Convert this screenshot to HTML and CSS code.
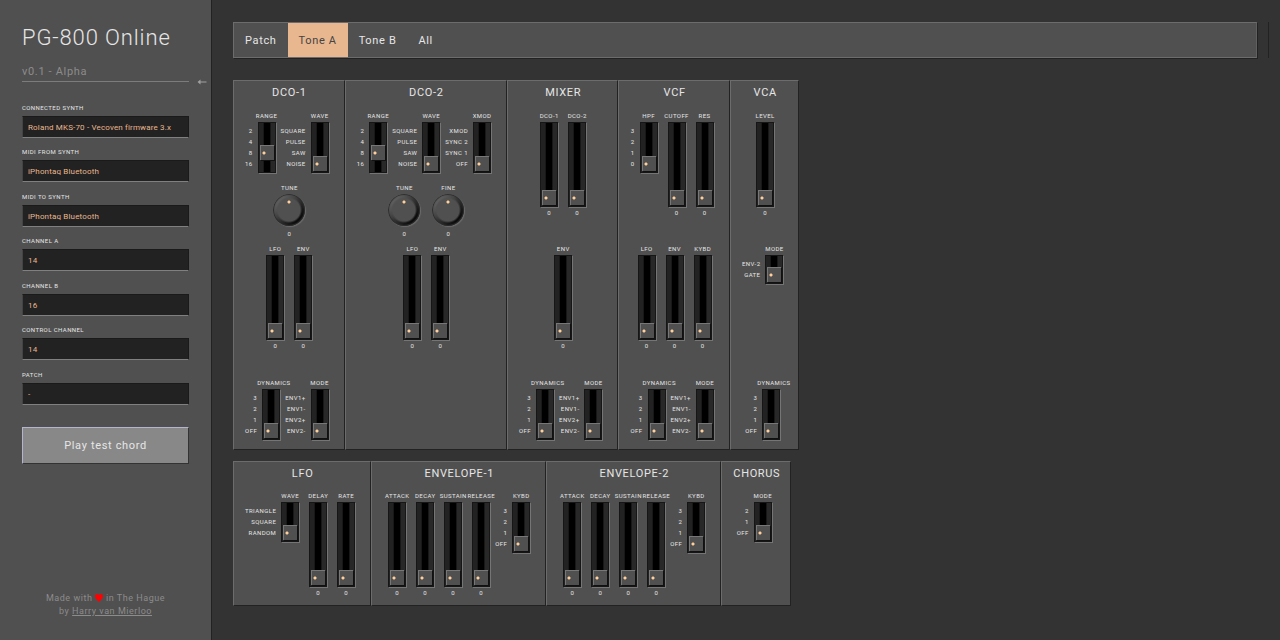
FILE: index.html
```html
<!DOCTYPE html>
<html lang="en">
<head>
<meta charset="utf-8">
<meta name="viewport" content="width=device-width, initial-scale=1">
<title>PG-800 Online</title>
<link rel="stylesheet" href="styles.css">
</head>
<body>
<div class="app">
  <aside class="sidebar">
    <h1 class="brand">PG-800 Online</h1>
    <div class="version-row">
      <p class="version">v0.1 - Alpha</p>
      <button class="collapse" type="button" aria-label="Collapse sidebar">
        <svg width="10" height="6" viewBox="0 0 10 6"><path d="M0.5 3 L3.5 0.5 V2.4 H9.5 V3.6 H3.5 V5.5 Z"/></svg>
      </button>
    </div>
    <form class="settings">
      <div class="fields">
        <label class="field"><span>CONNECTED SYNTH</span><select><option>Roland MKS-70 - Vecoven firmware 3.x</option></select></label>
        <label class="field"><span>MIDI FROM SYNTH</span><select><option>iPhontaq Bluetooth</option></select></label>
        <label class="field"><span>MIDI TO SYNTH</span><select><option>iPhontaq Bluetooth</option></select></label>
        <label class="field"><span>CHANNEL A</span><select><option>14</option></select></label>
        <label class="field"><span>CHANNEL B</span><select><option>16</option></select></label>
        <label class="field"><span>CONTROL CHANNEL</span><select><option>14</option></select></label>
        <label class="field"><span>PATCH</span><select><option>-</option></select></label>
      </div>
      <button class="play" type="button">Play test chord</button>
    </form>
    <footer class="credits">
      Made with <svg class="heart" width="8" height="8" viewBox="0 0 8 8"><path d="M4 8 C3.2 6.8 0 4.6 0 2.2 C0 -0.2 3 -0.6 4 1.3 C5 -0.6 8 -0.2 8 2.2 C8 4.6 4.8 6.8 4 8 Z"/></svg> in The Hague<br>
      by <a href="#">Harry van Mierloo</a>
    </footer>
  </aside>

  <main class="main">
    <div class="topbar">
      <nav class="tabs">
        <button class="tab" type="button">Patch</button>
        <button class="tab active" type="button">Tone A</button>
        <button class="tab" type="button">Tone B</button>
        <button class="tab" type="button">All</button>
      </nav>
      <div class="edge"></div>
    </div>

    <div class="rack">
      <section class="panel tall">
        <h2>DCO-1</h2>
        <div class="row r1">
          <ul class="options"><li>2</li><li>4</li><li>8</li><li>16</li></ul>
          <label class="unit"><span>RANGE</span><input class="slot pos4" type="range" min="0" max="3" value="1"></label>
          <ul class="options"><li>SQUARE</li><li>PULSE</li><li>SAW</li><li>NOISE</li></ul>
          <label class="unit"><span>WAVE</span><input class="slot pos4" type="range" min="0" max="3" value="0"></label>
        </div>
        <div class="row r2">
          <label class="unit wide"><span>TUNE</span><input class="knob" type="range" min="-12" max="12" value="0"><output>0</output></label>
        </div>
        <div class="row r3">
          <label class="unit"><span>LFO</span><input class="slot long" type="range" value="0"><output>0</output></label>
          <label class="unit"><span>ENV</span><input class="slot long" type="range" value="0"><output>0</output></label>
        </div>
        <div class="row r4">
          <ul class="options"><li>3</li><li>2</li><li>1</li><li>OFF</li></ul>
          <label class="unit"><span>DYNAMICS</span><input class="slot pos4" type="range" min="0" max="3" value="0"></label>
          <ul class="options"><li>ENV1+</li><li>ENV1-</li><li>ENV2+</li><li>ENV2-</li></ul>
          <label class="unit"><span>MODE</span><input class="slot pos4" type="range" min="0" max="3" value="0"></label>
        </div>
      </section>

      <section class="panel tall">
        <h2>DCO-2</h2>
        <div class="row r1">
          <ul class="options"><li>2</li><li>4</li><li>8</li><li>16</li></ul>
          <label class="unit"><span>RANGE</span><input class="slot pos4" type="range" min="0" max="3" value="1"></label>
          <ul class="options"><li>SQUARE</li><li>PULSE</li><li>SAW</li><li>NOISE</li></ul>
          <label class="unit"><span>WAVE</span><input class="slot pos4" type="range" min="0" max="3" value="0"></label>
          <ul class="options"><li>XMOD</li><li>SYNC 2</li><li>SYNC 1</li><li>OFF</li></ul>
          <label class="unit"><span>XMOD</span><input class="slot pos4" type="range" min="0" max="3" value="0"></label>
        </div>
        <div class="row r2">
          <label class="unit wide"><span>TUNE</span><input class="knob" type="range" min="-12" max="12" value="0"><output>0</output></label>
          <label class="unit wide"><span>FINE</span><input class="knob" type="range" min="-12" max="12" value="0"><output>0</output></label>
        </div>
        <div class="row r3">
          <label class="unit"><span>LFO</span><input class="slot long" type="range" value="0"><output>0</output></label>
          <label class="unit"><span>ENV</span><input class="slot long" type="range" value="0"><output>0</output></label>
        </div>
      </section>

      <section class="panel tall">
        <h2>MIXER</h2>
        <div class="row r1">
          <label class="unit"><span>DCO-1</span><input class="slot long" type="range" value="0"><output>0</output></label>
          <label class="unit"><span>DCO-2</span><input class="slot long" type="range" value="0"><output>0</output></label>
        </div>
        <div class="row r3">
          <label class="unit"><span>ENV</span><input class="slot long" type="range" value="0"><output>0</output></label>
        </div>
        <div class="row r4">
          <ul class="options"><li>3</li><li>2</li><li>1</li><li>OFF</li></ul>
          <label class="unit"><span>DYNAMICS</span><input class="slot pos4" type="range" min="0" max="3" value="0"></label>
          <ul class="options"><li>ENV1+</li><li>ENV1-</li><li>ENV2+</li><li>ENV2-</li></ul>
          <label class="unit"><span>MODE</span><input class="slot pos4" type="range" min="0" max="3" value="0"></label>
        </div>
      </section>

      <section class="panel tall">
        <h2>VCF</h2>
        <div class="row r1">
          <ul class="options"><li>3</li><li>2</li><li>1</li><li>0</li></ul>
          <label class="unit"><span>HPF</span><input class="slot pos4" type="range" min="0" max="3" value="0"></label>
          <label class="unit"><span>CUTOFF</span><input class="slot long" type="range" value="0"><output>0</output></label>
          <label class="unit"><span>RES</span><input class="slot long" type="range" value="0"><output>0</output></label>
        </div>
        <div class="row r3">
          <label class="unit"><span>LFO</span><input class="slot long" type="range" value="0"><output>0</output></label>
          <label class="unit"><span>ENV</span><input class="slot long" type="range" value="0"><output>0</output></label>
          <label class="unit"><span>KYBD</span><input class="slot long" type="range" value="0"><output>0</output></label>
        </div>
        <div class="row r4">
          <ul class="options"><li>3</li><li>2</li><li>1</li><li>OFF</li></ul>
          <label class="unit"><span>DYNAMICS</span><input class="slot pos4" type="range" min="0" max="3" value="0"></label>
          <ul class="options"><li>ENV1+</li><li>ENV1-</li><li>ENV2+</li><li>ENV2-</li></ul>
          <label class="unit"><span>MODE</span><input class="slot pos4" type="range" min="0" max="3" value="0"></label>
        </div>
      </section>

      <section class="panel tall">
        <h2>VCA</h2>
        <div class="row r1">
          <label class="unit"><span>LEVEL</span><input class="slot long" type="range" value="0"><output>0</output></label>
        </div>
        <div class="row r3">
          <ul class="options"><li>ENV-2</li><li>GATE</li></ul>
          <label class="unit"><span>MODE</span><input class="slot pos2" type="range" min="0" max="1" value="0"></label>
        </div>
        <div class="row r4">
          <ul class="options"><li>3</li><li>2</li><li>1</li><li>OFF</li></ul>
          <label class="unit"><span>DYNAMICS</span><input class="slot pos4" type="range" min="0" max="3" value="0"></label>
        </div>
      </section>
    </div>

    <div class="rack">
      <section class="panel short">
        <h2>LFO</h2>
        <div class="row">
          <ul class="options"><li>TRIANGLE</li><li>SQUARE</li><li>RANDOM</li></ul>
          <label class="unit"><span>WAVE</span><input class="slot pos3" type="range" min="0" max="2" value="0"></label>
          <label class="unit"><span>DELAY</span><input class="slot long" type="range" value="0"><output>0</output></label>
          <label class="unit"><span>RATE</span><input class="slot long" type="range" value="0"><output>0</output></label>
        </div>
      </section>

      <section class="panel short">
        <h2>ENVELOPE-1</h2>
        <div class="row">
          <label class="unit"><span>ATTACK</span><input class="slot long" type="range" value="0"><output>0</output></label>
          <label class="unit"><span>DECAY</span><input class="slot long" type="range" value="0"><output>0</output></label>
          <label class="unit"><span>SUSTAIN</span><input class="slot long" type="range" value="0"><output>0</output></label>
          <label class="unit"><span>RELEASE</span><input class="slot long" type="range" value="0"><output>0</output></label>
          <ul class="options"><li>3</li><li>2</li><li>1</li><li>OFF</li></ul>
          <label class="unit"><span>KYBD</span><input class="slot pos4" type="range" min="0" max="3" value="0"></label>
        </div>
      </section>

      <section class="panel short">
        <h2>ENVELOPE-2</h2>
        <div class="row">
          <label class="unit"><span>ATTACK</span><input class="slot long" type="range" value="0"><output>0</output></label>
          <label class="unit"><span>DECAY</span><input class="slot long" type="range" value="0"><output>0</output></label>
          <label class="unit"><span>SUSTAIN</span><input class="slot long" type="range" value="0"><output>0</output></label>
          <label class="unit"><span>RELEASE</span><input class="slot long" type="range" value="0"><output>0</output></label>
          <ul class="options"><li>3</li><li>2</li><li>1</li><li>OFF</li></ul>
          <label class="unit"><span>KYBD</span><input class="slot pos4" type="range" min="0" max="3" value="0"></label>
        </div>
      </section>

      <section class="panel short">
        <h2>CHORUS</h2>
        <div class="row">
          <ul class="options"><li>2</li><li>1</li><li>OFF</li></ul>
          <label class="unit"><span>MODE</span><input class="slot pos3" type="range" min="0" max="2" value="0"></label>
        </div>
      </section>
    </div>
  </main>
</div>
</body>
</html>
```
FILE: styles.css
```css
:root {
  --surface: #505050;
  --backdrop: #333333;
  --light-edge: #6c6c6c;
  --dark-edge: #222222;
  --accent: #e8b78f;
  --text: #e6e6e6;
  --muted: #8c8c8c;
}

* {
  box-sizing: border-box;
}

body {
  margin: 0;
  background: var(--backdrop);
  color: var(--text);
  font-family: Roboto, "Liberation Sans", sans-serif;
}

button,
select {
  font: inherit;
  border-radius: 0;
}

h2,
.version,
.credits,
button {
  letter-spacing: 0.06em;
}

.app {
  display: flex;
  min-height: 100vh;
}

/* Sidebar */

.sidebar {
  flex: 0 0 212px;
  display: flex;
  flex-direction: column;
  padding: 22px 0 22px 22px;
  background: var(--surface);
  border-right: 1px solid var(--dark-edge);
}

.brand {
  margin: 0;
  font-size: 22px;
  line-height: 32px;
  font-weight: 300;
  letter-spacing: 0.04em;
  white-space: nowrap;
}

.version-row {
  display: flex;
  align-items: flex-end;
  margin-top: 9px;
}

.version {
  flex: 1;
  margin: 0;
  font-size: 11px;
  line-height: 18px;
  color: var(--muted);
  border-bottom: 1px solid #7c7c7c;
}

.collapse {
  display: flex;
  align-items: center;
  justify-content: center;
  width: 22px;
  height: 12px;
  margin-bottom: -6px;
  padding: 0 0 0 4px;
  border: 0;
  background: none;
}

.collapse svg {
  fill: #a0a0a0;
}

.settings {
  margin-top: 20px;
  padding-right: 22px;
}

.fields {
  display: grid;
  grid-auto-rows: 1fr;
  min-height: 311px;
}

.field {
  display: flex;
  flex-direction: column;
  gap: 3px;
  font-size: 6px;
  line-height: 11px;
  letter-spacing: 0.07em;
}

.field select {
  appearance: none;
  width: 100%;
  height: 22px;
  padding: 2px 5px 0;
  background: #222222;
  color: var(--accent);
  font-size: 8px;
  line-height: 18px;
  letter-spacing: 0.02em;
  border: 1px solid #1a1a1a;
  border-left-color: #444444;
  border-bottom-color: #808080;
}

.play {
  width: 100%;
  height: 37px;
  margin-top: 14px;
  background: #888888;
  color: var(--text);
  font-size: 11px;
  border: 1px solid #333333;
  border-top-color: #b4b4cc;
  border-left-color: #b4b4cc;
}

.credits {
  margin-top: auto;
  padding-right: 22px;
  color: var(--muted);
  font-size: 9px;
  line-height: 13px;
  text-align: center;
}

.credits a {
  color: inherit;
}

.heart {
  fill: #ff0000;
  vertical-align: -1px;
}

/* Main area */

.main {
  flex: 1;
  min-width: 0;
  padding: 22px 11px 22px 21px;
}

.topbar {
  display: flex;
  gap: 11px;
  margin-bottom: 22px;
}

.tabs {
  flex: 1;
  display: flex;
  background: var(--surface);
  border: 1px solid var(--light-edge);
  border-right-color: #606060;
  box-shadow: 1px 1px 0 var(--dark-edge);
}

.tab {
  height: 34px;
  padding: 0 11px;
  border: 0;
  background: none;
  color: var(--text);
  font-size: 11px;
}

.tab.active {
  background: var(--accent);
  color: #444444;
}

.edge {
  width: 1px;
  background: #222222;
}

.rack {
  display: flex;
  align-items: stretch;
  margin-bottom: 11px;
}

.panel {
  padding: 0 10px 9px 11px;
  background: var(--surface);
  border: 1px solid var(--dark-edge);
  border-top-color: var(--light-edge);
  border-left-color: var(--light-edge);
}

.panel h2 {
  margin: 0;
  padding-top: 1px;
  font-size: 11px;
  line-height: 22px;
  font-weight: 400;
  text-align: center;
}

.tall {
  display: grid;
  grid-template-rows: 30px 72px 61px 134px auto;
  align-content: start;
}

.short {
  padding-bottom: 7px;
}

.short h2 {
  margin-bottom: 6px;
}

.row {
  display: flex;
  justify-content: center;
  font-size: 6px;
  line-height: 11px;
  letter-spacing: 0.07em;
}

.r1 { grid-row: 2; }
.r2 { grid-row: 3; }
.r3 { grid-row: 4; }
.r4 { grid-row: 5; }

.options {
  margin: 0;
  padding: 14px 0 0;
  list-style: none;
  text-align: right;
  white-space: nowrap;
}

.unit {
  display: flex;
  flex-direction: column;
  align-items: safe center;
  width: 28px;
  white-space: nowrap;
}

.unit span {
  line-height: 9px;
  margin-bottom: 2px;
}

.wide {
  width: 44px;
}

/* Faders and switches */

.slot {
  appearance: none;
  writing-mode: vertical-lr;
  direction: rtl;
  flex: none;
  width: 18px;
  margin: 0;
  padding: 1px;
  border: 1px solid #161616;
  background: linear-gradient(to right, #222222 4px, #181818 4px 5px, #000000 5px 11px, #181818 11px 12px, #282828 12px);
  box-shadow: 1px 1px 0 #757575;
}

.long { height: 85px; }
.pos4 { height: 51px; }
.pos3 { height: 40px; }
.pos2 { height: 29px; }

.slot::-webkit-slider-thumb {
  appearance: none;
  width: 14px;
  height: 15px;
  border-top: 1px solid #777777;
  border-left: 1px solid #777777;
  background: radial-gradient(circle at 3px 7px, #ffcf9c 1px, #505050 2px);
  box-shadow: 1px 1px 0 #111111;
}

.knob {
  appearance: none;
  width: 32px;
  height: 32px;
  margin: 0 0 2px;
  border-radius: 50%;
  background:
    radial-gradient(circle at 16px 8px, #ffcf9c 1px, transparent 2px),
    radial-gradient(circle, #505050 11px, transparent 13px),
    linear-gradient(135deg, #6a6a6a 10%, #444444 40%, #0c0c0c 80%);
  box-shadow: inset 0 0 1px 1px #2c2c2c, 1px 1px 1px 0 #6c6c6c;
}

.knob::-webkit-slider-thumb {
  appearance: none;
  width: 1px;
  height: 1px;
}
```
